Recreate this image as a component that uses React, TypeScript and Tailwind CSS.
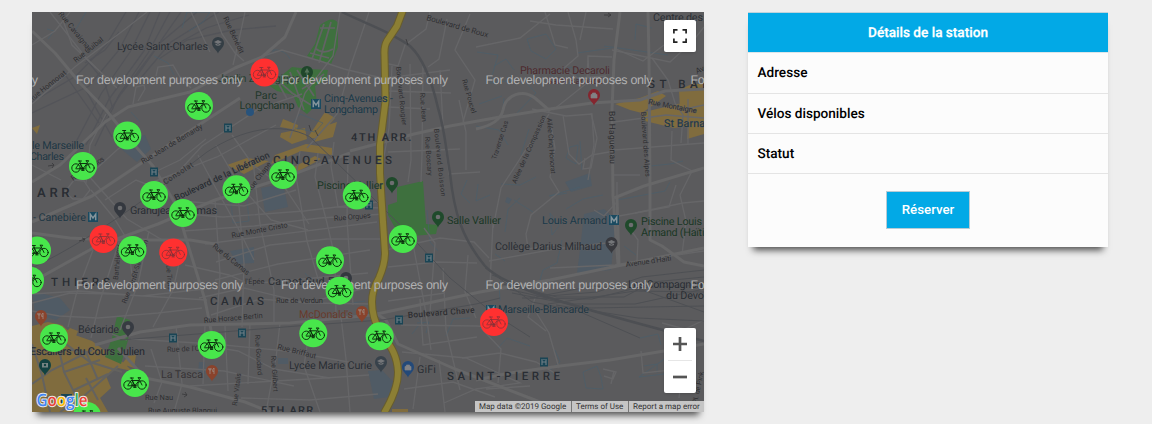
import React from "react";

type Label = { x: number; y: number; t: string; s?: number; r?: number; c?: string; w?: number; ls?: number; a?: "start" | "middle" | "end"; len?: number };

const MAJOR = [
  "M32 182L60 165L105 122L128 107L190 92L235 68L262 57L285 37L296 12",
  "M32 31L55 53L80 83L106 110L130 140L153 166L176 205L185 235L205 300L214 345",
  "M32 222L92 196L176 140L240 98",
  "M32 282L95 247L158 224L215 200L283 178L350 153",
  "M32 233L70 238L110 240L190 240L215 244",
  "M704 89L665 91L640 100L592 103L550 109L500 117L450 126L414 134L350 151",
  "M620 12L614 60L612 110L613 196L618 264",
  "M95 345L140 332L190 325L290 323L372 315L480 292L550 280L704 248",
  "M476 129Q500 124 503 110C506 94 523 89 535 98L550 111",
  "M614 198L644 186L704 168",
  "M617 197L619 265",
  "M648 12L649 60L650 186L650 240L662 246L684 262L704 266",
  "M476 380L510 373L560 366L610 360L670 350L704 344",
  "M118 348L145 378L190 387L245 402L270 412",
  "M374 312L386 320L398 344L455 369L540 402L550 412",
];
const MINOR = [
  "M32 104L76 66L124 30L147 12", "M50 12L86 58L117 88", "M32 45L55 31L70 12",
  "M156 76L158 67L173 65L180 77L191 88", "M138 101L145 89L144 85L136 87L133 104",
  "M214 12L222 34L235 53L244 61", "M245 12L239 40L233 65", "M191 12L210 52",
  "M260 57L282 50L320 61L344 69L382 78", "M340 12L333 56L305 93L290 138", "M369 12L350 68L337 114L307 148",
  "M382 78L402 76L450 70", "M430 12L426 29L405 45L398 66L384 63", "M470 14L455 50L475 80L463 122",
  "M392 66L389 128L382 168", "M410 64L411 160L408 182", "M423 66L422 155L421 182", "M388 91L451 93M388 107L430 109M388 152L460 149",
  "M447 19L439 59L428 67", "M440 70L443 126L449 174L480 172", "M459 100L466 132L466 170",
  "M476 47L520 38L550 14", "M545 12L555 45L568 48", "M568 12L576 40L578 56L563 69L578 78L606 76",
  "M530 21L556 25L613 29M586 12L580 40", "M612 50L670 62L693 41L704 27", "M616 49L643 61L664 45",
  "M589 77L588 56L612 57M588 56L587 83L553 110", "M532 109L566 116L592 114L594 145L588 180",
  "M549 114L523 154L501 188L493 228", "M550 120L555 148L550 177L559 192L531 215L526 234L528 249L555 245",
  "M563 115L569 154L579 164L592 155L609 152", "M591 113L597 138L591 168L583 169L585 158",
  "M614 122L666 115L704 118M614 150L704 143M614 175L640 175", "M652 58L668 80L675 103L683 115L681 143",
  "M672 131L671 160L692 171L680 195L686 221L682 255", "M688 99L688 144M704 105L685 109M635 213L683 203L704 201",
  "M630 229L638 240L637 262", "M619 216L669 207L676 185", "M594 210L604 216L617 202L617 182",
  "M489 261L555 249L607 243M493 223L490 285", "M550 268L615 265L656 258L704 251",
  "M60 12L72 45L96 68", "M181 169L202 146L260 108L302 94", "M198 155L219 194L238 228L254 260",
  "M216 145L238 183L271 220L308 230", "M232 135L253 165L285 188L309 224", "M157 171L180 160L206 139",
  "M153 182L217 157L276 125", "M65 192L74 180L84 181L90 190L83 199L73 199Z", "M84 180L118 149L139 137",
  "M86 183L90 145L106 114", "M32 165L61 180M91 190L114 218L128 241L133 284", "M105 200L136 180L151 186",
  "M87 174L127 219L174 247", "M180 201L244 206L296 190", "M187 214L223 217L304 211L378 202",
  "M183 231L254 226L320 218L385 214", "M215 200L220 274L217 320", "M237 183L244 263L242 327", "M253 161L260 224L274 290L274 322",
  "M205 244L251 238L377 222", "M216 262L270 245L327 239L388 239", "M215 280L278 264L370 250", "M185 265L229 275L249 284L368 273",
  "M199 298L244 288L306 303L370 287", "M211 315L260 299L309 303L371 304", "M300 151L296 176L307 241L321 289",
  "M318 153L315 177L327 223L335 258L336 318", "M348 154L347 220L353 305", "M334 142L331 166L338 207L386 208",
  "M386 250L440 238L474 242L489 258", "M388 267L437 262L477 263M424 228L435 243L430 313", "M413 244L426 313L431 350",
  "M388 301L445 293M401 325L477 326L499 328M420 299L423 345L477 337M443 268L446 330L460 390M468 255L465 292L476 318",
  "M280 323L276 358L266 412M311 320L304 366L320 412M341 317L346 359L350 412M250 323L248 384M225 326L228 391",
  "M176 326L182 384L174 412M205 325L203 384M32 311L59 316L98 318L158 313L202 308", "M93 250L76 295L68 327M119 242L99 304L91 338M149 231L138 284L120 330M183 246L173 290L153 327",
  "M32 294L80 291L142 296L204 289M32 303L70 293L112 294L207 300M131 339L214 344L286 351L354 363",
  "M151 349L162 382L154 403M145 366L224 371L294 386M190 386L310 379L369 375M202 345L238 351L274 369L330 378M241 398L310 400L378 394",
  "M404 389L453 382L495 397M420 357L413 409M439 360L445 412M402 352L466 358L520 383L476 389L444 403",
  "M503 281L537 293L528 317L546 331M481 328L501 349L498 383M462 358L500 353L536 362L558 375M486 389L530 386M534 309L549 333L559 368M603 369L616 372L613 379L604 376M614 371L611 384M641 351L643 373L671 370M684 351L679 398M704 320L685 329L662 323",
];
const RAILS = [
  "M126 12L106 45L76 76L32 102M139 12L119 50L89 86L32 113M150 12L130 52L101 94L75 144M160 12L144 51L109 99L86 145M170 12L148 53L119 95L95 146",
  "M181 12L153 52L121 94L93 135M197 12L160 43L133 81M219 12L171 42L140 79M249 15L206 28L166 50M276 26L232 30L187 40L159 59",
  "M80 52L104 81L113 109M83 85L112 137M66 76L99 123M119 32L105 50L85 63",
];
const WATER = [
  "M47 29L54 31L48 39M75 31L86 12M182 28L187 12L210 12L203 22L189 31M154 56L168 63L174 75M131 112L140 122",
  "M260 61C266 45 285 48 290 59M292 123L300 114L323 123L315 132L295 128M275 50C258 63 260 77 281 74",
  "M477 52L498 55L490 83L515 80M527 39L546 34L556 49L546 59L531 51ZM550 74L572 67L579 78L567 84ZM528 85L536 93L516 114M514 70L506 59L494 66",
  "M635 40L636 24L652 28M577 53L612 48M604 46L668 55M504 98L502 117M479 104L502 96M476 126L499 130L508 145",
  "M570 147L566 158L576 164L578 145Z M580 141L582 170M529 129L521 155M549 196L580 187M514 200L533 212M550 196L567 193M501 184L520 185L536 177M478 184L476 201L490 195M505 232L508 209L520 198M566 209L583 199L603 195M617 200L665 191L670 182",
  "M562 240L557 263L543 270L540 280L553 285M624 246L636 255M550 213L559 226L552 235ZM495 254L505 261M641 167L670 164L683 161",
  "M427 210L430 242L438 251M467 180L461 194L470 203M356 195C357 184 365 180 368 191M415 315L425 326M417 323L429 322L426 333",
  "M586 388L583 372L597 366L601 377L603 389ZM498 348L507 338L530 346M555 350L560 362L550 370L557 381M640 338L658 334L661 345M670 355L664 374L639 377ZM644 366L657 364L657 373",
  "M231 202L247 200L249 221L233 223ZM326 246L330 269L320 278M305 273L314 283M346 304L365 301M419 325L412 334M446 336L453 319L470 318M500 301L499 282L520 284",
];
const HIGHWAY = "M403 10L397 26L387 41Q384 46 384.5 55L385.5 101L380 145L380 173L383 222L385 253Q385 264 379 278Q372 290 372 302Q372 318 380 331C386 342 397 350 398 372Q398 390 384 413";

const LABELS: Label[] = [
  { x: 117, y: 50, t: "Lycée Saint-Charles", len: 91 },
  { x: 218, y: 82, t: "Jardin Zoologique", c: "#263e30", len: 82 },
  { x: 266, y: 99, t: "Parc", a: "middle", c: "#1e3629" }, { x: 267, y: 109, t: "Longchamp", a: "middle", c: "#1e3629", len: 55 },
  { x: 324, y: 102, t: "Cinq-Avenues -", c: "#193848", len: 69 }, { x: 324, y: 113, t: "Longchamp", c: "#193848", len: 54 },
  { x: 520, y: 74, t: "Pharmacie Decaroli", c: "#4c2a2e", len: 90 }, { x: 547, y: 84, t: "Saint Barnabé", c: "#4c3033", s: 9 },
  { x: 653, y: 21, t: "Centre des", len: 50 },
  { x: 32, y: 149, t: "le Marseille", c: "#1d3643", a: "start", len: 52 }, { x: 30, y: 160, t: "Charles", c: "#1d3643", len: 34 },
  { x: 33, y: 221, t: "- Canebière", c: "#1d3643", len: 53 },
  { x: 130, y: 214, t: "Grandjean Thomas", len: 87 },
  { x: 317, y: 189, t: "Piscine Vallier", c: "#193624", len: 66 }, { x: 447, y: 224, t: "Salle Vallier", c: "#193624", len: 54 },
  { x: 542, y: 224, t: "Louis Armand", c: "#193848", len: 65 },
  { x: 641, y: 225, t: "Piscine Louis", c: "#193624", len: 61 }, { x: 641, y: 236, t: "Armand (Haïti)", c: "#193624", len: 67 },
  { x: 495, y: 250, t: "Collège Darius Milhaud", len: 107 },
  { x: 628, y: 288, t: "Les Compagnons", len: 80 }, { x: 666, y: 299, t: "du Devoir", len: 44 },
  { x: 498, y: 313, t: "Marseille-Blancarde", c: "#1d3643", len: 91 },
  { x: 268, y: 285, t: "Carnot-Sud Est", len: 76 }, { x: 299, y: 318, t: "McDonald's", c: "#673a2b", len: 54 },
  { x: 289, y: 369, t: "Lycée Marie Curie", len: 83 }, { x: 417, y: 373, t: "GiFi", len: 19 },
  { x: 78, y: 333, t: "Bédaride", len: 41 }, { x: 30, y: 355, t: "Escaliers du Cours Julien", c: "#23272d", len: 115 },
  { x: 161, y: 378, t: "La Tasca", len: 42, c: "#373436" },
  { x: 664, y: 127, t: "St Barnabé", c: "#1d3643", len: 53 },
  { x: 351, y: 141, t: "4TH ARR.", w: 600, s: 11, ls: 1.5, len: 62 }, { x: 37, y: 197, t: "ARR.", w: 600, s: 13, ls: 2, len: 42 },
  { x: 273, y: 164, t: "CINQ-AVENUES", w: 500, s: 11.5, ls: 2, len: 121 }, { x: 648, y: 88, t: "ST BARNABÉ", w: 500, s: 11.5, ls: 2.6, len: 112 },
  { x: 51, y: 286, t: "THIERS", w: 500, s: 11.5, ls: 2, len: 61 }, { x: 210, y: 305, t: "CAMAS", w: 500, s: 11.5, ls: 2, len: 56 },
  { x: 447, y: 380, t: "SAINT-PIERRE", w: 500, s: 11.5, ls: 2, len: 115 }, { x: 261, y: 414, t: "5TH ARR.", w: 600, s: 11, ls: 1.5, len: 58 },
  { x: 76, y: 63, t: "Rue Guibal", s: 7.5, r: -39 }, { x: 58, y: 14, t: "Rue Cavaignac", s: 7.5, r: 51 },
  { x: 31, y: 102, t: "Rue Honnorat", s: 7.5, r: -38 }, { x: 223, y: 18, t: "Rue Bénédit", s: 7.5, r: 65 },
  { x: 143, y: 164, t: "Rue Jean de Bernardy", s: 7.5, r: -31, len: 70 }, { x: 151, y: 194, t: "Rue Consolat", s: 7.5, r: -33, len: 51 },
  { x: 176, y: 201, t: "Boulevard de la Libération", s: 9, r: -25, w: 500, len: 104 },
  { x: 250, y: 193, t: "Rue Chape", s: 7.5, r: -53 }, { x: 232, y: 238, t: "Rue Monte Cristo", s: 7.5, r: -11, len: 57 },
  { x: 334, y: 221, t: "Rue Orgues", s: 7.5, r: -5, len: 37 }, { x: 212, y: 247, t: "Rue du Camas", s: 7.5, r: 39, len: 45 },
  { x: 426, y: 20, t: "Boulevard de Roux", s: 8, r: 16, len: 64 }, { x: 396, y: 67, t: "Boulevard Rougier", s: 7, r: 84, len: 59 },
  { x: 420, y: 93, t: "Rue Jean", s: 7, r: 86 }, { x: 462, y: 80, t: "Rue Poucel", s: 7, r: 74 },
  { x: 425, y: 137, t: "Rue Boscary", s: 7, r: 86 }, { x: 434, y: 129, t: "Boulevard Boisson", s: 7, r: 84, len: 68 },
  { x: 496, y: 160, t: "Traverse Cas", s: 7, r: -72 }, { x: 516, y: 184, t: "Allée de la Compassion", s: 7, r: -66, len: 74 },
  { x: 547, y: 118, t: "Allée Cinq Honorat", s: 7, r: 86, len: 56 }, { x: 609, y: 111, t: "Bd Haguenau", s: 8.5, r: 89, len: 53 },
  { x: 641, y: 112, t: "Boulevard des Alpes", s: 7, r: 86, len: 65 }, { x: 648, y: 104, t: "Rue Montaigne", s: 7.5, r: 11, len: 49 },
  { x: 697, y: 74, t: "Avenue", s: 8, r: -25 }, { x: 626, y: 267, t: "Avenue d'Haïti", s: 7.5, r: -8, len: 46 },
  { x: 118, y: 280, t: "Barthélemy", s: 7, r: -85 }, { x: 136, y: 278, t: "St-Savournin", s: 7, r: -72 },
  { x: 166, y: 261, t: "Rue Trois", s: 7, r: 86 }, { x: 126, y: 304, t: "Rue Saint", s: 7, r: -68 },
  { x: 276, y: 303, t: "Rue de Verdun", s: 7.5, len: 47 }, { x: 204, y: 323, t: "Rue Horace Bertin", s: 7.5, r: -5, len: 59 },
  { x: 167, y: 352, t: "Rue de l'Olivier", s: 7.5, r: -2 }, { x: 145, y: 400, t: "Rue Nau", s: 7.5 }, { x: 148, y: 413, t: "Rue Auguste Blanqui", s: 7.5 },
  { x: 237, y: 406, t: "Rue Vitalis", s: 7, r: -83 }, { x: 277, y: 349, t: "Rue Briffaut", s: 7.5, r: 14 },
  { x: 255, y: 335, t: "Rue Goudard", s: 7, r: 86 }, { x: 271, y: 356, t: "Rue Gilibert", s: 7, r: 86 },
  { x: 408, y: 318, t: "Boulevard Chave", s: 8.5, r: -4.5, w: 500, len: 67 }, { x: 245, y: 284, t: "l'Épée", s: 7.5 },
  { x: 73, y: 181, t: "Rue des Héros", s: 7.5, r: -33, len: 38 }, { x: 697, y: 404, t: "Pl. de Pink", s: 7, r: -78 },
];

const PINS = [
  { x: 218, y: 52, c: "#343e45", k: "cap" }, { x: 307, y: 81, c: "#1f462b", k: "tree" }, { x: 594, y: 104, c: "#84262f", k: "bag" },
  { x: 120, y: 217, c: "#34383f", k: "dot" }, { x: 392, y: 192, c: "#1f4a2b", k: "dot" }, { x: 438, y: 226, c: "#1f4a2b", k: "dot" },
  { x: 631, y: 234, c: "#1f4a2b", k: "dot" }, { x: 611.5, y: 252, c: "#38393e", k: "cap" },
  { x: 346, y: 287, c: "#34383f", k: "dot" }, { x: 362, y: 321, c: "#8a432c", k: "food" }, { x: 381, y: 371, c: "#38424b", k: "cap" },
  { x: 408, y: 376, c: "#234979", k: "bag" }, { x: 128, y: 336, c: "#373b42", k: "dot" }, { x: 41, y: 325, c: "#8a432c", k: "food" },
  { x: 212, y: 380, c: "#8a432c", k: "food" }, { x: 45, y: 374, c: "#124241", k: "photo" },
];
const METROS = [[316, 104], [93, 217], [614, 220], [491, 310]];
const TRAMS = [[228, 128], [154, 172], [369, 205], [429, 258], [173, 338], [242, 333], [399, 320], [544, 362]];
const GREEN = [[199, 106], [127.3, 135.5], [83, 166], [154, 195], [183, 213], [236.5, 189.3], [132.5, 250], [37, 250.5], [30, 280.5], [283, 175], [356.8, 195.5], [403, 239], [330, 260.3], [339.6, 290.7], [313.3, 333.3], [379.7, 336.3], [211.7, 345], [54, 338], [135, 383], [87, 416]];
const RED = [[264.5, 72.5], [103.5, 239], [173.3, 252.5], [494, 322]];

function Pin({ x, y, c, k }: { x: number; y: number; c: string; k: string }) {
  return (
    <g transform={`translate(${x} ${y})`}>
      <path d="M0 1.5C-1-2-6-4-6-9A6 6 0 0 1 6-9C6-4 1-2 0 1.5Z" fill={c} />
      {k === "dot" && <circle cy="-9" r="2.3" fill="#6d6e70" />}
      {k === "cap" && <path d="M-4-10L0-12L4-10L0-8ZM-2.5-8.5V-7Q0-5.5 2.5-7V-8.5L0-7.2Z" fill="#747679" />}
      {k === "bag" && <path d="M-3-9.5H3V-6H-3ZM-1.6-9.5V-11H1.6V-9.5" fill="#828285" stroke="#828285" strokeWidth=".7" />}
      {k === "food" && <path d="M-2-12V-9.6M-3.1-12V-10.2H-1V-12M-2-10V-6M2-6V-12Q.4-11 .6-8.6H2" fill="none" stroke="#9b8479" strokeWidth=".9" />}
      {k === "tree" && <path d="M0-13L2.5-8.5H-2.5ZM-.5-9H.5V-6H-.5Z" fill="#53725a" />}
      {k === "photo" && <path d="M-3-11H3V-6.5H-3ZM-1.2-9A1.2 1.2 0 1 0 1.2-9A1.2 1.2 0 1 0-1.2-9" fillRule="evenodd" fill="#758483" />}
    </g>
  );
}

function Station({ x, y, red }: { x: number; y: number; red?: boolean }) {
  return (
    <g transform={`translate(${x} ${y})`}>
      <circle r="14" fill={red ? "#ff3030" : "#48e64b"} />
      <g fill="none" stroke={red ? "#7d3038" : "#0b2a0c"} strokeWidth={red ? 0.7 : 0.95} strokeLinecap="round" strokeLinejoin="round">
        <circle cx="-7" cy="2" r="4.2" />
        <circle cx="7" cy="2" r="4.2" />
        <path d="M-7 2L-3.4-3L0 2.8H-7M-4.7-5H-1.6M-3.4-5L-.5 3M-3.3-2.5H4L0 2.8M3.2-5.3H5.6Q6-4.5 5-4.3M3.5-5L7 2M-1.3 4.4H1.1" />
        <circle cx="-.2" cy="2.8" r="1.2" />
      </g>
    </g>
  );
}

function MapArtwork() {
  return (
    <svg viewBox="32 12 672 400" className="block h-[400px] w-[672px]" fontFamily='Roboto, "Liberation Sans", sans-serif' textRendering="geometricPrecision">
      <rect x="32" y="12" width="672" height="400" fill="#5b5b5d" />
      <g fill="#505b65">
        <path d="M129 138L145 135L151 149L137 162L120 148ZM261 188L283 184L288 207L265 212ZM230 251L254 247L254 263L237 264ZM565 182L590 173L592 186L571 192ZM584 214L604 209L616 219L611 270L577 273L580 250ZM368 371L382 370L395 384L390 397L374 399ZM32 291L60 298L70 310L56 320L35 314Z" />
        <path d="M199 362H205V374H198ZM278 358H288V364H278ZM507 197L512 199L509 204L505 202Z" />
      </g>
      <g fill="#806c3e">
        <path d="M283 119L298 125L297 130L280 127ZM281 133L305 128L307 139L292 144L280 137ZM325 112L335 118L317 139L308 137ZM325 126L337 122L333 137L314 142ZM227 165L247 158L269 161L244 174ZM275 155L306 144L332 148L332 155L301 151L271 164ZM290 169L315 156L321 159L286 178ZM615 104L640 98L658 91L666 96L649 108L642 113L630 110ZM640 113L682 103L704 85V134L687 139L688 126L674 128L645 121ZM679 90L692 84L704 84V118L680 109Z" />
        <path d="M32 326L48 322L62 325L72 334L92 341L108 353L124 363L132 371L118 368L106 376L111 388L100 398L108 412H32ZM128 356L136 355L134 368L122 364ZM70 328L78 331L76 336L66 332ZM392 409H408V412H392ZM32 128L40 125L37 134Z" />
      </g>
      <g fill="#3e703e">
        <path d="M320 25Q333 15 338 23L338 47L331 64L307 56L315 44ZM264 82L281 76L292 67L309 69L328 70L326 80L315 86L317 104L307 114L298 107L293 95L277 91ZM117 316L130 320L128 340L121 364L105 357L112 338Z" />
        <path d="M397 187L423 181L426 224L438 225L436 234L400 237L388 215V205L397 202Z" />
      </g>
      <g fill="none" stroke="#636365" strokeWidth="1.7">
        <path d="M312 59L324 24M319 63L331 22M315 48Q323 55 333 49M320 28H335M310 53L329 58M266 84L282 84L292 93L311 105M275 77L287 99M290 72L304 110M297 70L314 96M305 70L311 84L324 74M302 89L322 77M112 334L127 340" />
      </g>
      <g fill="none" stroke="#535459" strokeWidth="1.3">{RAILS.map((d) => <path key={d} d={d} />)}</g>
      <g fill="none" stroke="#48606f" strokeWidth=".75" opacity=".8">{WATER.map((d) => <path key={d} d={d} />)}</g>
      <g fill="none" stroke="#666668" strokeWidth="1.35">{MINOR.map((d) => <path key={d} d={d} />)}</g>
      <g fill="none" stroke="#676768" strokeWidth="3" strokeLinejoin="round">{MAJOR.map((d) => <path key={d} d={d} />)}</g>
      <g fill="none" stroke="#63625f" strokeWidth="2">
        <path d="M32 344L42 375L50 412M58 345L64 372L84 412M32 384L52 370L92 350M64 372L100 360M74 390L108 374M60 412L84 396L118 366M70 350L86 352L98 380M86 378L98 400M44 350L66 344L90 362L122 372" />
      </g>
      <path d="M342 12C366 24 388 30 410 46C425 60 433 86 438 108C445 130 446 151 450 173C454 213 462 238 485 266C506 288 560 303 704 341" fill="none" stroke="#4d4f53" strokeWidth="2.5" />
      <g fill="none" stroke="#4e5054" strokeWidth="1">
        <path d="M32 268C100 235 160 188 207 152C242 129 281 121 310 137L365 190L403 228L450 278M450 278L494 314L530 337M120 340L210 333L297 326L382 320L476 304L500 298" />
        <path d="M485 268L532 302L578 311L640 338M492 275L548 296L597 292L642 277L704 270M499 283L557 297L624 297L653 282L704 277M507 289L574 304L635 304L704 289M512 293L590 308L704 306M522 298L592 299L636 288L704 285M548 304L635 291L704 292M556 305L638 318L704 321M530 298L593 286L643 290L704 312" />
      </g>
      <path d={HIGHWAY} fill="none" stroke="#685d2d" strokeWidth="8" strokeLinejoin="round" />
      <path d={HIGHWAY} fill="none" stroke="#8c7f34" strokeWidth="6" strokeLinejoin="round" />
      {LABELS.map((l) => (
        <text key={`${l.t}${l.x}`} x={l.x} y={l.y} fontSize={l.s ?? 10.8} fill={l.c ?? (l.s && l.s < 9 ? "#2d2d30" : "#292d33")} fontWeight={l.w ?? 400} letterSpacing={l.ls} textAnchor={l.a} textLength={l.len} transform={l.r ? `rotate(${l.r} ${l.x} ${l.y})` : undefined} stroke="#606062" strokeWidth=".6" paintOrder="stroke">{l.t}</text>
      ))}
      {TRAMS.map(([x, y]) => (
        <g key={`${x}-${y}`} transform={`translate(${x} ${y})`}>
          <rect x="-4" y="-4.5" width="8" height="9" fill="#1a4555" />
          <path d="M-2-3V3M2-3V3M-1.8 0H1.8M0-3V-2" stroke="#718087" strokeWidth="1.1" />
        </g>
      ))}
      {METROS.map(([x, y]) => (
        <g key={`${x}-${y}`} transform={`translate(${x} ${y})`}>
          <rect x="-5" y="-5" width="10" height="10" fill="#1a4a60" />
          <path d="M-2.7 3.2V-2.7L0 1L2.7-2.7V3.2" fill="none" stroke="#84949b" strokeWidth="1.5" />
        </g>
      ))}
      {PINS.map((p) => <Pin key={`${p.x}-${p.y}`} {...p} />)}
      <circle cx="250" cy="112" r="4" fill="#28537c" />
      <rect x="61" y="394" width="11" height="10" fill="#174452" />
      <g fill="none" stroke="#38393b" strokeWidth=".8">
        <path d="M182 394L187 395M185 392L187 395L184 397M48 166L54 165M52 163L54 165L52 168M79 241L85 239M82 238L85 239L83 242M604 15H611M608 13L611 15L608 17M309 125L311 131M315 130L318 136M406 39L408 45" />
      </g>
      <g fill="#b1b1b2" fontFamily='"Liberation Sans", Arial, sans-serif' fontSize="12.5">
        {[79, 284].map((cy) => [-129, 76, 281, 485.5, 690.5].map((x) => (
          <text key={`${cy}-${x}`} x={x} y={cy + 4.5} textLength="167">For development purposes only</text>
        )))}
      </g>
      {GREEN.map(([x, y]) => <Station key={`${x}-${y}`} x={x} y={y} />)}
      {RED.map(([x, y]) => <Station key={`${x}-${y}`} x={x} y={y} red />)}
      <text x="36.5" y="406" fontFamily='"Open Sans", sans-serif' fontSize="17" fontWeight="600" textLength="51" lengthAdjust="spacingAndGlyphs" stroke="#e8e8e8" strokeWidth="2" paintOrder="stroke" strokeLinejoin="round">
        <tspan fill="#4285f4">G</tspan><tspan fill="#ea4335">o</tspan><tspan fill="#fbbc05">o</tspan><tspan fill="#4285f4">g</tspan><tspan fill="#34a853">l</tspan><tspan fill="#ea4335">e</tspan>
      </text>
    </svg>
  );
}

export default function App() {
  return (
    <main className="flex h-[424px] w-[1152px] items-start gap-11 overflow-hidden bg-[#eeeeee] pl-8 pt-3 font-[Roboto,sans-serif]">
      <section className="relative h-[400px] w-[672px] shrink-0 shadow-[0_8px_7px_-5px_rgba(0,0,0,.7)]">
        <MapArtwork />
        <button aria-label="Plein écran" className="absolute right-2 top-2 grid size-8 place-items-center rounded-[2px] bg-white shadow-sm">
          <svg width="14" height="14" viewBox="0 0 14 14" fill="none" stroke="#222" strokeWidth="1.7"><path d="M.9 4.5V.9H4.5M9.5 .9H13.1V4.5M13.1 9.5V13.1H9.5M4.5 13.1H.9V9.5" /></svg>
        </button>
        <div className="absolute bottom-[19px] right-2 flex h-[65px] w-8 flex-col items-center rounded-[2px] bg-white shadow-sm">
          <button aria-label="Zoom avant" className="grid h-8 w-8 place-items-center"><svg width="14" height="14" viewBox="0 0 14 14"><path d="M7 0V14M0 7H14" stroke="#555" strokeWidth="2.7" /></svg></button>
          <span className="h-px w-6 bg-[#e6e6e6]" />
          <button aria-label="Zoom arrière" className="grid h-8 w-8 place-items-center"><svg width="14" height="14" viewBox="0 0 14 14"><path d="M0 7H14" stroke="#555" strokeWidth="2.7" /></svg></button>
        </div>
        <div className="absolute bottom-0 right-0 flex h-[11px] w-[229px] items-center whitespace-nowrap bg-[#c5c5c5] text-[8px] leading-[11px] text-[#333] [text-rendering:geometricPrecision]">
          <span className="w-24 pl-1">Map data ©2019 Google</span>
          <span className="w-[57px] border-l border-[#777] pl-1">Terms of Use</span>
          <span className="border-l border-[#777] pl-1">Report a map error</span>
        </div>
      </section>

      <section className="h-[235px] w-[360px] bg-[#fcfcfc] text-[13.6px] font-medium text-black shadow-[0_8px_7px_-5px_rgba(0,0,0,.7)] [text-rendering:geometricPrecision]">
        <h2 className="flex h-[41px] items-center justify-center border-y border-t-[#bed3dc] border-b-[#dce5e9] bg-[#02a9e6] pt-0.5 font-medium text-white [-webkit-text-stroke:.25px_white]">Détails de la station</h2>
        <div className="flex h-[41px] items-center border-b border-[#e4e4e4] px-[9.5px] pt-px">Adresse</div>
        <div className="flex h-10 items-center border-b border-[#e4e4e4] px-[9.5px] pt-px">Vélos disponibles</div>
        <div className="flex h-10 items-center border-b border-[#e4e4e4] px-[9.5px] pt-px">Statut</div>
        <div className="flex justify-center pt-[17px]">
          <button className="h-[38px] w-[84px] border border-[#b7cbd5] bg-[#02a9e6] text-[13.3px] font-medium text-white">Réserver</button>
        </div>
      </section>
    </main>
  );
}
